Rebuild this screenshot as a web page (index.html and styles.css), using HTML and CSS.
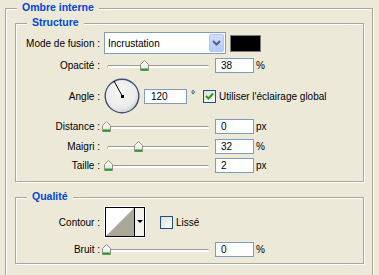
FILE: index.html
```html
<!DOCTYPE html>
<html lang="fr">
<head>
  <meta charset="UTF-8" />
  <title>Ombre interne</title>
  <link rel="stylesheet" href="styles.css">
</head>
<body>
  <div class="group outer">
    <div class="group-title">Ombre interne</div>

    <div class="group inner structure">
      <div class="group-title">Structure</div>

      <div class="row row-mode">
        <span class="label">Mode de fusion :</span>
        <div class="select">
          <span class="select-value">Incrustation</span>
          <span class="select-btn">
            <svg width="9" height="6" viewBox="0 0 9 6"><path d="M1 1 L4.5 4.5 L8 1" fill="none" stroke="#4d6185" stroke-width="2"/></svg>
          </span>
        </div>
        <div class="swatch"></div>
      </div>

      <div class="row row-opacity">
        <span class="label">Opacité :</span>
        <div class="slider" style="--v:38"><div class="track"></div><span class="thumb"></span></div>
        <div class="field">38</div>
        <span class="unit">%</span>
      </div>

      <div class="row row-angle">
        <span class="label">Angle :</span>
        <svg class="dial" width="36" height="36" viewBox="0 0 36 36">
          <defs>
            <radialGradient id="dialFill" cx="45%" cy="40%" r="60%">
              <stop offset="0" stop-color="#f6f6f4"/>
              <stop offset="0.75" stop-color="#ececea"/>
              <stop offset="1" stop-color="#d2d2cc"/>
            </radialGradient>
          </defs>
          <circle cx="18" cy="18" r="16.8" fill="url(#dialFill)" stroke="#3c4f78" stroke-width="1.4"/>
          <line x1="18.5" y1="18.5" x2="10" y2="3" stroke="#000" stroke-width="1"/>
          <rect x="17" y="17" width="3" height="3" fill="#000"/>
        </svg>
        <div class="field field-angle">120</div>
        <span class="unit deg">°</span>
        <span class="check checked">
          <svg width="11" height="11" viewBox="0 0 11 11"><path d="M2 5 L4.5 7.5 L9 2.5" fill="none" stroke="#21a121" stroke-width="2"/></svg>
        </span>
        <span class="check-label">Utiliser l'éclairage global</span>
      </div>

      <div class="row row-distance">
        <span class="label">Distance :</span>
        <div class="slider" style="--v:0"><div class="track"></div><span class="thumb"></span></div>
        <div class="field">0</div>
        <span class="unit">px</span>
      </div>

      <div class="row row-spread">
        <span class="label">Maigri :</span>
        <div class="slider" style="--v:32"><div class="track"></div><span class="thumb"></span></div>
        <div class="field">32</div>
        <span class="unit">%</span>
      </div>

      <div class="row row-size">
        <span class="label">Taille :</span>
        <div class="slider" style="--v:2"><div class="track"></div><span class="thumb"></span></div>
        <div class="field">2</div>
        <span class="unit">px</span>
      </div>
    </div>

    <div class="group inner quality">
      <div class="group-title">Qualité</div>

      <div class="row row-contour">
        <span class="label">Contour :</span>
        <div class="contour">
          <svg class="contour-preview" width="28" height="28" viewBox="0 0 28 28">
            <rect width="28" height="28" fill="#fff"/>
            <polygon points="0,28 28,0 28,28" fill="#aca899"/>
          </svg>
          <span class="contour-btn"></span>
        </div>
        <span class="check"></span>
        <span class="check-label">Lissé</span>
      </div>

      <div class="row row-noise">
        <span class="label">Bruit :</span>
        <div class="slider" style="--v:0"><div class="track"></div><span class="thumb"></span></div>
        <div class="field">0</div>
        <span class="unit">%</span>
      </div>
    </div>
  </div>
</body>
</html>
```

FILE: styles.css
```css
html, body {
  margin: 0;
  height: 275px;
  overflow: hidden;
}
body {
  background: #ece9d8;
  font-family: 'Liberation Sans', Arial, sans-serif;
  font-size: 10px;
  color: #000;
}
.group {
  position: relative;
  box-sizing: border-box;
  border: 1px solid #aca899;
  box-shadow: 1px 1px 0 #fff, inset 1px 1px 0 #fff;
}
.group-title {
  position: absolute;
  top: -8px;
  left: 11px;
  padding: 0 5px;
  line-height: 13px;
  background: #ece9d8;
  color: #0046d5;
  font-weight: 700;
  font-size: 10.5px;
}
/* the outer frame runs on below the window edge */
.outer {
  margin: 8px 0 0 5px;
  width: 368px;
  height: 267px;
  border-bottom: none;
}
.inner {
  margin-left: 9px;
  width: 349px;
}
.structure {
  margin-top: 14px;
  padding-bottom: 8px;
}
.quality {
  margin-top: 15px;
  padding-bottom: 6px;
}

.row {
  display: flex;
  align-items: center;
  height: 15px;
  margin-top: 5px;
}
.label {
  width: 84px;
  margin-right: 4px;
  text-align: right;
  white-space: nowrap;
}
.row-mode { height: 22px; margin-top: 8px; }
.row-opacity { margin-top: 4px; }
.row-angle { height: 36px; }
.row-size { margin-top: 4px; }
.row-contour { height: 32px; margin-top: 8px; }
.row-noise { margin-top: 4px; }

/* blend mode combo */
.select {
  box-sizing: border-box;
  width: 122px;
  height: 22px;
  display: flex;
  align-items: center;
  background: #fff;
  border: 1px solid #7f9db9;
}
.select-value {
  flex: 1;
  padding-left: 3px;
}
.select-btn {
  box-sizing: border-box;
  width: 15px;
  height: 18px;
  margin-right: 1px;
  display: flex;
  align-items: center;
  justify-content: center;
  background: linear-gradient(#cfdcfd, #b7cbf8);
  border: 1px solid #b1c6f4;
  border-radius: 2px;
}
.swatch {
  box-sizing: border-box;
  width: 31px;
  height: 17px;
  margin-left: 4px;
  background: #000;
  border: 1px solid #7b7b7b;
}

/* sliders */
.slider {
  position: relative;
  width: 107px;
  height: 15px;
}
.track {
  position: absolute;
  left: 3px;
  right: 2px;
  top: 7px;
  height: 2px;
  background: #fff;
  border-top: 1px solid #9d9b8f;
  border-left: 1px solid #bcbab0;
  border-radius: 2px;
}
.thumb {
  position: absolute;
  top: 2px;
  left: calc(var(--v) * 1px - 2px);
  width: 9px;
  height: 11px;
  background: url("data:image/svg+xml;utf8,<svg xmlns='http://www.w3.org/2000/svg' width='9' height='11'><defs><linearGradient id='g' x1='0' y1='0' x2='0' y2='1'><stop offset='0' stop-color='%23ffffff'/><stop offset='1' stop-color='%23e4e3dc'/></linearGradient></defs><polygon points='0.5,4.5 4.5,0.5 8.5,4.5 8.5,10.5 0.5,10.5' fill='url(%23g)' stroke='%23928f80'/><rect x='1' y='8.5' width='7' height='2' fill='%2321a121'/></svg>") no-repeat;
}
.field {
  box-sizing: border-box;
  width: 39px;
  height: 15px;
  margin-left: 4px;
  padding-left: 5px;
  line-height: 13px;
  background: #fff;
  border: 1px solid #7f9db9;
}
.unit {
  margin-left: 2px;
}

/* angle */
.dial {
  display: block;
}
.field-angle {
  width: 43px;
  padding-left: 6px;
}
.deg {
  margin-left: 4px;
  margin-top: -4px;
}
.check {
  box-sizing: border-box;
  width: 13px;
  height: 13px;
  display: flex;
  align-items: center;
  justify-content: center;
  border: 1px solid #1c5180;
  background: linear-gradient(135deg, #dcdcd7, #fff);
}
.row-angle .check {
  margin-left: 8px;
}
.check-label {
  margin-left: 3px;
  white-space: nowrap;
}

/* contour */
.contour {
  box-sizing: border-box;
  width: 42px;
  height: 32px;
  padding: 1px;
  background: #fff;
  display: flex;
}
.contour-preview {
  display: block;
  border: 1px solid #000;
  border-right: none;
}
.contour-btn {
  flex: 1;
  position: relative;
  background: #f3f2ec;
  border: 1px solid #000;
}
.contour-btn::after {
  content: "";
  position: absolute;
  left: 2px;
  top: 12px;
  border-left: 3px solid transparent;
  border-right: 3px solid transparent;
  border-top: 3px solid #000;
}
.row-contour .check {
  margin-left: 14px;
}
```
